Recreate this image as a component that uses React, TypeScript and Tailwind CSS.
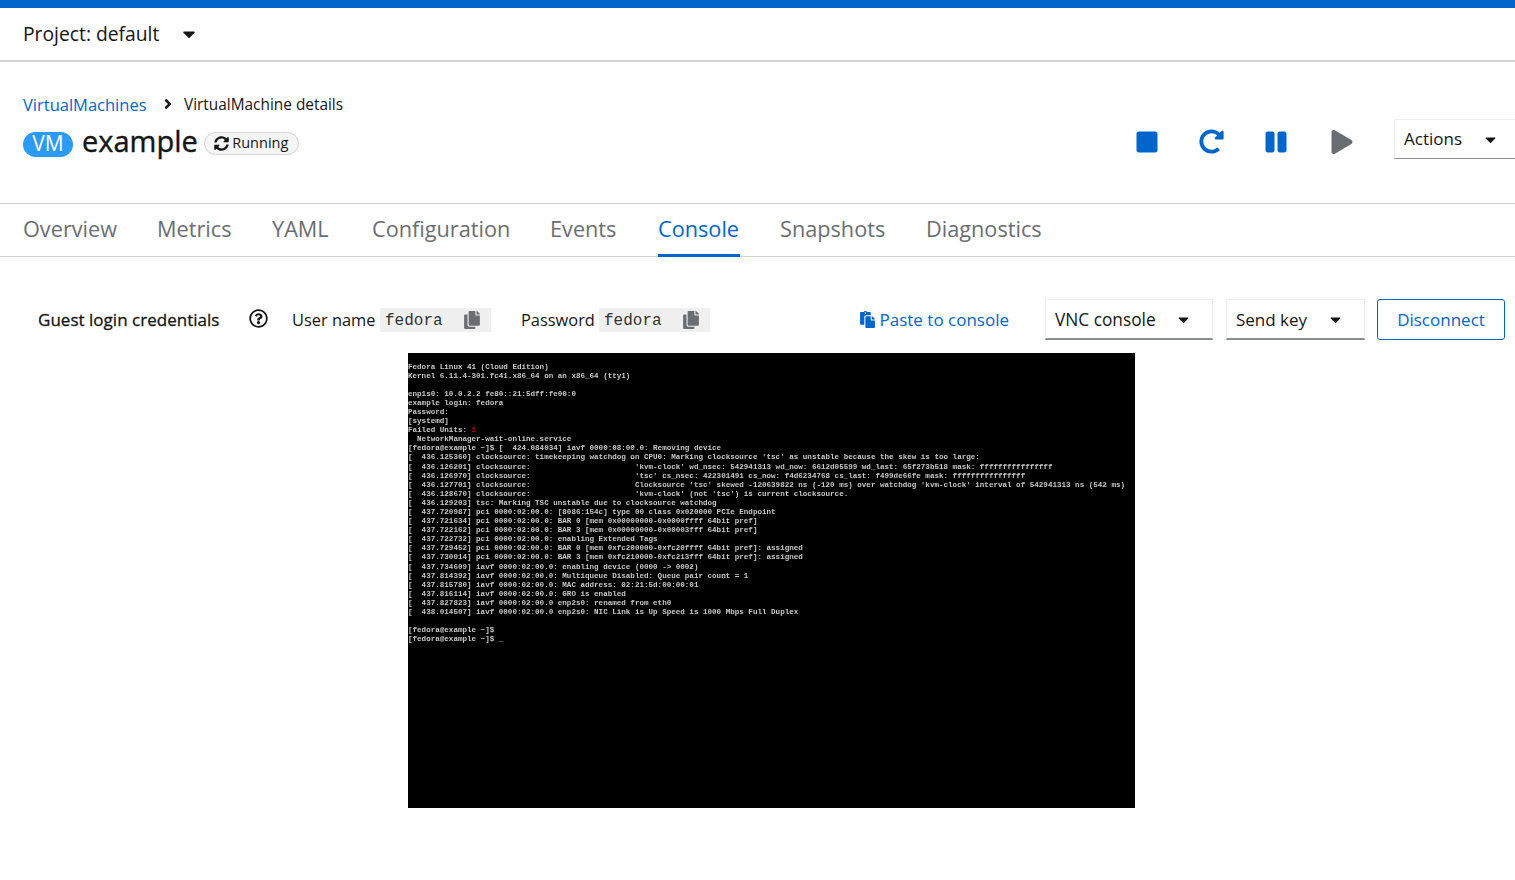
import { FaCaretDown, FaAngleRight, FaSyncAlt, FaStop, FaRedoAlt, FaPause, FaPlay, FaRegQuestionCircle, FaCopy, FaPaste } from "react-icons/fa";

const tabs = [
  ["Overview", "w-[94px]"],
  ["Metrics", "w-[75px]"],
  ["YAML", "w-[60px]"],
  ["Configuration", "w-[138px]"],
  ["Events", "w-[68px]"],
  ["Console", "w-[82px]"],
  ["Snapshots", "w-[106px]"],
  ["Diagnostics", "w-[117px]"],
];

const consoleText = `Fedora Linux 41 (Cloud Edition)
Kernel 6.11.4-301.fc41.x86_64 on an x86_64 (tty1)

enp1s0: 10.0.2.2 fe80::21:5dff:fe00:0
example login: fedora
Password:
[systemd]
Failed Units: @
  NetworkManager-wait-online.service
[fedora@example ~]$ [  424.084034] iavf 0000:08:00.0: Removing device
[  436.125360] clocksource: timekeeping watchdog on CPU0: Marking clocksource 'tsc' as unstable because the skew is too large:
[  436.126201] clocksource:                       'kvm-clock' wd_nsec: 542941313 wd_now: 6612d05599 wd_last: 65f273b518 mask: ffffffffffffffff
[  436.126970] clocksource:                       'tsc' cs_nsec: 422301491 cs_now: f4d6234768 cs_last: f499de66fe mask: ffffffffffffffff
[  436.127701] clocksource:                       Clocksource 'tsc' skewed -120639822 ns (-120 ms) over watchdog 'kvm-clock' interval of 542941313 ns (542 ms)
[  436.128670] clocksource:                       'kvm-clock' (not 'tsc') is current clocksource.
[  436.129203] tsc: Marking TSC unstable due to clocksource watchdog
[  437.720987] pci 0000:02:00.0: [8086:154c] type 00 class 0x020000 PCIe Endpoint
[  437.721634] pci 0000:02:00.0: BAR 0 [mem 0x00000000-0x0000ffff 64bit pref]
[  437.722162] pci 0000:02:00.0: BAR 3 [mem 0x00000000-0x00003fff 64bit pref]
[  437.722732] pci 0000:02:00.0: enabling Extended Tags
[  437.729452] pci 0000:02:00.0: BAR 0 [mem 0xfc200000-0xfc20ffff 64bit pref]: assigned
[  437.730014] pci 0000:02:00.0: BAR 3 [mem 0xfc210000-0xfc213fff 64bit pref]: assigned
[  437.734609] iavf 0000:02:00.0: enabling device (0000 -> 0002)
[  437.814392] iavf 0000:02:00.0: Multiqueue Disabled: Queue pair count = 1
[  437.815780] iavf 0000:02:00.0: MAC address: 02:21:5d:00:00:01
[  437.816114] iavf 0000:02:00.0: GRO is enabled
[  437.827823] iavf 0000:02:00.0 enp2s0: renamed from eth0
[  438.014507] iavf 0000:02:00.0 enp2s0: NIC Link is Up Speed is 1000 Mbps Full Duplex

[fedora@example ~]$
[fedora@example ~]$ _`;

function Credential({ label, labelW, value }: { label: string; labelW: string; value: string }) {
  return (
    <div className="flex items-center">
      <span className={`${labelW} text-[16.4px] text-[#151515]`}>{label}</span>
      <span className="flex h-6 w-[111px] items-center bg-[#f0f0f0] pl-[5px]">
        <span className="w-[79px] pt-[2px] font-['Liberation_Mono',monospace] text-[16px] text-[#333]">{value}</span>
        <FaCopy className="-ml-px h-[18px] w-[18px] text-[#6a6e73]" />
      </span>
    </div>
  );
}

function Select({ label, w, sz }: { label: string; w: string; sz: string }) {
  return (
    <div className={`${w} flex h-[41px] items-center justify-between border border-[#f0f0f0] border-b-2 border-b-[#8a8d90] pl-[9px] pr-[20px] text-[#151515] ${sz}`}>
      <span className="pt-[2px]">{label}</span>
      <FaCaretDown className="h-[17px] w-[17px] text-[#151515]" />
    </div>
  );
}

export default function App() {
  const parts = consoleText.split("@\n");
  return (
    <div className="h-[880px] w-[1515px] overflow-hidden bg-white font-['Open_Sans',sans-serif]">
      <div className="h-2 bg-[#06c]" />
      <div className="flex h-[54px] items-center border-b-2 border-[#d2d2d2] pl-[23px] text-[19.3px] text-[#151515]">
        <span className="w-[156px]">Project: default</span>
        <FaCaretDown className="h-[20px] w-[20px]" />
      </div>

      <div className="flex h-[141px] items-start justify-between pl-[23px] pt-[33px]">
        <div>
          <div className="flex h-5 items-center">
            <span className="w-[137px] text-[16.5px] text-[#06c]">VirtualMachines</span>
            <FaAngleRight className="h-4 w-4 -translate-y-px text-[#151515]" />
            <span className="ml-[8px] text-[15.4px] text-[#151515]">VirtualMachine details</span>
          </div>
          <div className="mt-[8px] flex items-center">
            <span className="mt-[2px] flex h-[25px] w-[50px] items-center justify-center rounded-full bg-[#2b9af3] text-[21px] text-white">VM</span>
            <span className="ml-[9px] pb-[4px] text-[29px] leading-[36px] text-[#151515] [-webkit-text-stroke:0.4px_#151515]">example</span>
            <span className="ml-[6px] flex h-[23px] w-[95px] items-center justify-center gap-[3px] rounded-full border border-[#d2d2d2] bg-[#f5f5f5] text-[14.5px] text-[#151515]">
              <FaSyncAlt className="h-[15px] w-[15px]" />
              Running
            </span>
          </div>
        </div>
        <div className="mt-[24px] flex items-start">
          <div className="mt-[10px] flex w-[259px] items-center">
            <FaStop className="h-[24px] w-[24px] text-[#06c]" />
            <FaRedoAlt className="ml-[40px] h-[25px] w-[25px] text-[#06c]" />
            <FaPause className="ml-[40px] h-[24px] w-[24px] text-[#06c]" />
            <FaPlay className="ml-[42px] h-[24px] w-[24px] text-[#6a6e73]" />
          </div>
          <div className="flex h-10 w-[121px] items-center justify-between border border-r-0 border-[#f0f0f0] border-b-[#8a8d90] pl-[9px] pr-[16px] text-[17px] text-[#151515]">
            <span>Actions</span>
            <FaCaretDown className="h-[17px] w-[17px]" />
          </div>
        </div>
      </div>

      <div className="flex h-[54px] gap-10 border-y border-[#d2d2d2] pl-[23px] text-[21.7px]">
        {tabs.map(([name, w]) => (
          <div
            key={name}
            className={`${w} flex h-[53px] items-center whitespace-nowrap border-b-[3px] ${name === "Console" ? "border-[#06c] text-[#06c]" : "border-transparent text-[#6a6e73]"}`}
          >
            {name}
          </div>
        ))}
      </div>

      <div className="mt-[42px] flex h-[41px] items-center pl-[38px] pr-[10px]">
        <span className="w-[211px] text-[17px] tracking-[0.02px] text-[#151515] [-webkit-text-stroke:0.3px_#151515]">Guest login credentials</span>
        <FaRegQuestionCircle className="mb-[2px] h-[19px] w-[19px] text-[#151515]" />
        <div className="ml-[24px] mt-[2px] flex gap-[30px]">
          <Credential label="User name" labelW="w-[88px]" value="fedora" />
          <Credential label="Password" labelW="w-[78px]" value="fedora" />
        </div>
        <div className="ml-auto flex items-center">
          <div className="mr-[36px] flex items-center gap-[4px] text-[17px] text-[#06c]">
            <FaPaste className="h-[17px] w-[17px]" />
            Paste to console
          </div>
          <Select label="VNC console" w="w-[168px]" sz="text-[17.3px]" />
          <div className="w-[13px]" />
          <Select label="Send key" w="w-[139px]" sz="text-[17px]" />
          <div className="w-[12px]" />
          <div className="flex h-[41px] w-[128px] items-center justify-center rounded-[3px] border border-[#06c] text-[17px] text-[#06c]">Disconnect</div>
        </div>
      </div>

      <div className="ml-[408px] mt-[13px] h-[455px] w-[727px] overflow-hidden bg-black pt-[9.5px]">
        <pre className="font-['Liberation_Mono',monospace] text-[7.57px] font-bold leading-[9.09px] text-[#c8c8c8] blur-[0.25px]">
          {parts[0]}
          <span className="text-[#c00]">1</span>
          {"\n" + parts[1]}
        </pre>
      </div>
    </div>
  );
}
